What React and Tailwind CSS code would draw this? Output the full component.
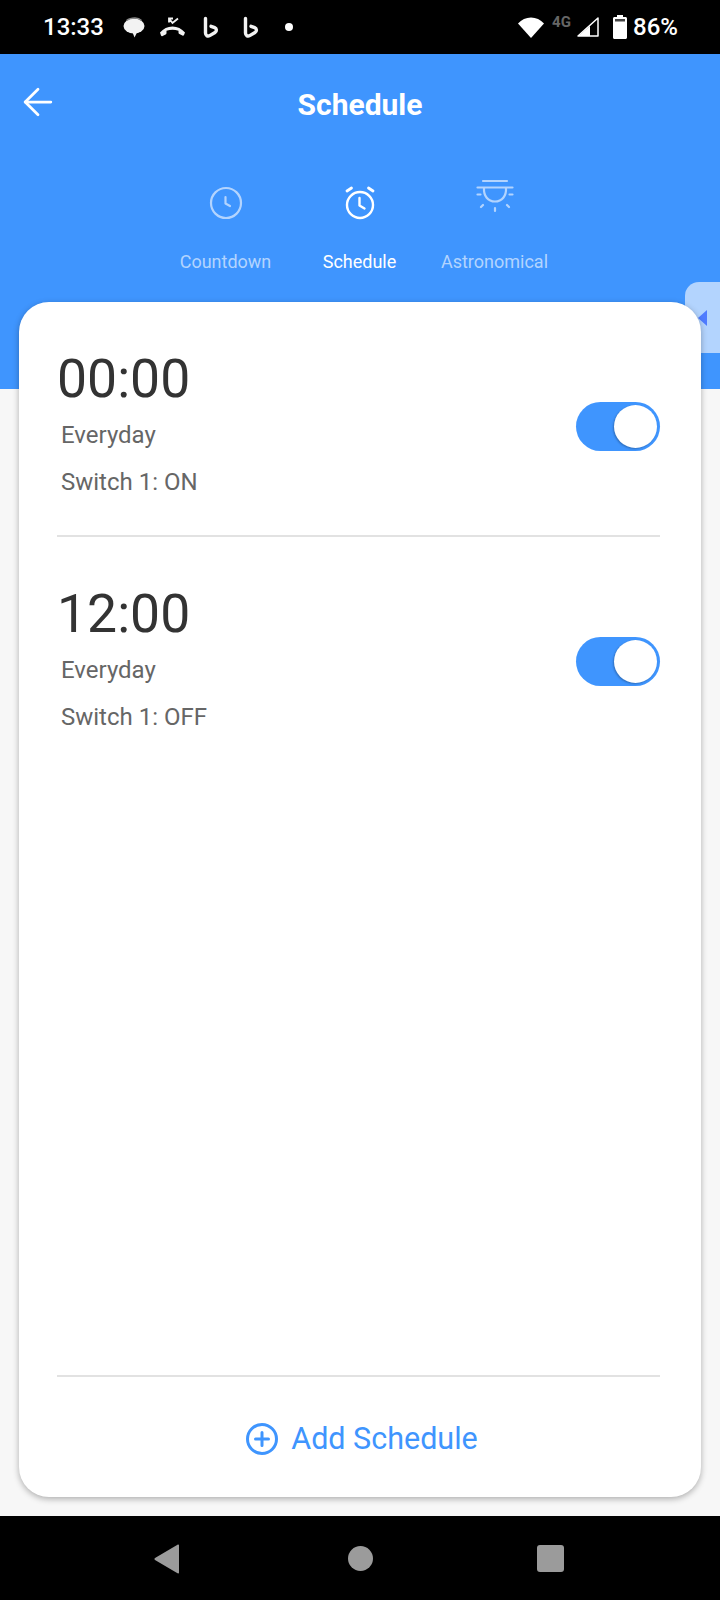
import { ArrowLeft } from "lucide-react";

const schedules = [
  { time: "00:00", repeat: "Everyday", action: "Switch 1: ON" },
  { time: "12:00", repeat: "Everyday", action: "Switch 1: OFF" },
];

function BingIcon() {
  return (
    <svg width="16" height="23" viewBox="0 0 16 23" fill="none" stroke="#f2f2f2" strokeWidth="3.400" strokeLinejoin="round" strokeLinecap="round">
      <path d="M2.500 2.500v14.500c0 2.500 2.200 3.800 4.200 2.600l5.300-3.100c2-1.200 1.800-4-.3-4.800l-3.700-1.400" />
    </svg>
  );
}

function StatusBar() {
  return (
    <div className="flex h-[54px] shrink-0 items-center bg-black pl-[43px] pr-[42px] text-white">
      <span className="w-[80px] text-[24px] font-medium leading-none">13:33</span>
      <svg width="22" height="21" viewBox="0 0 22 21" fill="none">
        <ellipse cx="11" cy="9" rx="10.500" ry="7.500" fill="#f2f2f2" />
        <path d="M9 14l2.500 6.500 3-6z" fill="#f2f2f2" />
        <path d="M3.500 3.500C6 1.500 9 1 12 1c3 0 5 1 6.500 2.500" stroke="#8a8a8a" strokeWidth="1.400" />
      </svg>
      <svg className="ml-[14px]" width="27" height="20" viewBox="0 0 27 20" fill="none">
        <path d="M1 15.500c3.500-4 7.500-6 12.500-6s9 2 12.500 6l-1 2.500c-.400.800-1 .800-1.600.500l-3-1.500c-.600-.300-.900-.800-.900-1.500v-1.800c-4-1.200-8-1.200-12 0V16c0 .700-.300 1.200-.900 1.500l-3 1.500c-.600.300-1.200.300-1.600-.500z" fill="#f2f2f2" />
        <path d="M10 1.500l3.500 4.500 5.500-4.500M14 1.500h-4v4" stroke="#f2f2f2" strokeWidth="1.800" />
      </svg>
      <div className="ml-[17px]"><BingIcon /></div>
      <div className="ml-[24px]"><BingIcon /></div>
      <span className="ml-[26px] size-[8px] rounded-full bg-white" />
      <div className="flex-1" />
      <svg width="26" height="21" viewBox="0 0 26 21" fill="#fff">
        <path d="M13 21L0 6.500C3.500 2.500 8 .5 13 .5s9.500 2 13 6z" />
      </svg>
      <span className="ml-[8px] mb-[9px] w-[25px] text-[15px] font-bold leading-none text-[#666666]">4G</span>
      <svg width="22" height="20" viewBox="0 0 22 20" fill="none">
        <path d="M21 1v18H1z" stroke="#fff" strokeWidth="1.500" strokeLinejoin="round" />
        <path d="M13 9v10H1.500z" fill="#fff" />
      </svg>
      <svg className="ml-[14px]" width="14" height="24" viewBox="0 0 14 24" fill="#fff">
        <path d="M4 0h6v2h2.500c.800 0 1.500.700 1.500 1.500v19c0 .800-.700 1.500-1.500 1.500h-11C.700 24 0 23.300 0 22.500v-19C0 2.700.700 2 1.500 2H4z" />
        <rect x="2" y="4" width="10" height="2.500" fill="#444" />
      </svg>
      <span className="ml-[6px] text-[24px] font-medium leading-none">86%</span>
    </div>
  );
}

function ClockIcon() {
  return (
    <svg width="36" height="36" viewBox="0 0 36 36" fill="none" stroke="#b3d4fe" strokeWidth="2.200" strokeLinecap="round" strokeLinejoin="round">
      <circle cx="18" cy="18" r="15" />
      <path d="M17.500 12v6.500l4.500 2.500" />
    </svg>
  );
}

function AlarmIcon() {
  return (
    <svg width="36" height="40" viewBox="0 0 36 40" fill="none" stroke="#fff" strokeWidth="2.400" strokeLinecap="round" strokeLinejoin="round">
      <circle cx="18" cy="24" r="13" />
      <path d="M17.500 17v7.500l5 3" />
      <path d="M5 10L9.500 7M31 10L26.500 7" strokeWidth="2.800" />
    </svg>
  );
}

function LampIcon() {
  return (
    <svg width="38" height="34" viewBox="0 0 38 34" fill="none" stroke="#b3d4fe" strokeWidth="2.200" strokeLinecap="round" strokeLinejoin="round">
      <path d="M7 2h24M1.500 8.500h35" />
      <path d="M8 9c-.500 8 4 13.500 11 13.500S30.500 17 30 9" />
      <path d="M1.500 15.500h3M33.500 15.500h3M7 26l-2 2M31 26l2 2M19 29v3" />
    </svg>
  );
}

function Toggle() {
  return (
    <div className="flex h-[49px] w-[84px] items-center justify-end rounded-full bg-[#3f95fe] pr-[3px]">
      <span className="size-[43px] rounded-full bg-white shadow-[-1px_1px_2px_rgba(0,0,0,0.25)]" />
    </div>
  );
}

function ScheduleRow({ item, className }) {
  return (
    <div className={`flex items-center justify-between ${className}`}>
      <div className="pb-[9px]">
        <div className="text-[53.500px] leading-[60px] text-[#333333]">{item.time}</div>
        <div className="ml-[4px] mt-[12px] text-[24px] leading-[28px] text-[#666666]">{item.repeat}</div>
        <div className="ml-[4px] mt-[19px] text-[24px] leading-[28px] text-[#666666]">{item.action}</div>
      </div>
      <Toggle />
    </div>
  );
}

export default function App() {
  return (
    <div className="flex h-[1600px] w-[720px] flex-col overflow-hidden bg-[#f7f7f7] font-['Roboto',sans-serif]">
      <StatusBar />

      <header className="relative h-[335px] shrink-0 bg-[#3f95fe] text-white">
        <div className="flex h-[102px] items-center justify-center pb-[1px]">
          <ArrowLeft className="absolute left-[16px] top-[26px]" size={44} strokeWidth={1.500} />
          <h1 className="text-[30px] font-bold leading-none">Schedule</h1>
        </div>
        <div className="mt-[13px] flex justify-center">
          <div className="flex w-[134px] flex-col items-center">
            <div className="flex h-[52px] items-end"><ClockIcon /></div>
            <span className="mt-[30px] text-[18px] leading-[22px] text-[#b3d4fe]">Countdown</span>
          </div>
          <div className="flex w-[134px] flex-col items-center">
            <div className="flex h-[52px] items-end"><AlarmIcon /></div>
            <span className="mt-[30px] text-[18px] leading-[22px] text-white">Schedule</span>
          </div>
          <div className="ml-[1px] flex w-[134px] flex-col items-center">
            <div className="flex h-[52px] items-start pt-[10px]"><LampIcon /></div>
            <span className="mt-[30px] text-[18px] leading-[22px] text-[#b3d4fe]">Astronomical</span>
          </div>
        </div>
        <div className="absolute right-0 top-[228px] flex h-[71px] w-[35px] items-center rounded-l-[14px] bg-[#b3d4fe] pl-[13px]">
          <span className="h-0 w-0 border-y-[8px] border-r-[9px] border-y-transparent border-r-[#4f7cff]" />
        </div>
      </header>

      <main className="relative mx-[19px] -mt-[87px] flex h-[1195px] flex-col rounded-[30px] bg-white pl-[38px] pr-[41px] shadow-[0_2px_6px_rgba(0,0,0,0.3)]">
        <ScheduleRow item={schedules[0]} className="h-[235px] border-b-2 border-[#e2e2e2] pt-[16px]" />
        <ScheduleRow item={schedules[1]} className="h-[235px] pt-[14px]" />
        <div className="flex-1" />
        <button className="flex h-[122px] items-center justify-center gap-[13px] border-t-2 border-[#e2e2e2] pl-[7px] pt-[3px] text-[30.500px] text-[#3f95fe]">
          <svg width="32" height="32" viewBox="0 0 32 32" fill="none" stroke="#3f95fe" strokeWidth="3" strokeLinecap="round">
            <circle cx="16" cy="16" r="14.500" />
            <path d="M16 9.500v13M9.500 16h13" />
          </svg>
          Add Schedule
        </button>
      </main>

      <div className="flex-1" />

      <nav className="relative flex h-[84px] shrink-0 items-center bg-black pl-[154px] pt-[1px]">
        <svg width="26" height="30" viewBox="0 0 26 30" fill="#9b9b9b">
          <path d="M25 1.500v27c0 .800-.800 1.200-1.500.800L1 16c-.700-.400-.700-1.500 0-2L23.500.700C24.200.300 25 .700 25 1.500z" />
        </svg>
        <span className="ml-[168px] size-[25px] rounded-full bg-[#9b9b9b]" />
        <span className="ml-[164px] size-[27px] rounded-[3px] bg-[#9b9b9b]" />
      </nav>
    </div>
  );
}
